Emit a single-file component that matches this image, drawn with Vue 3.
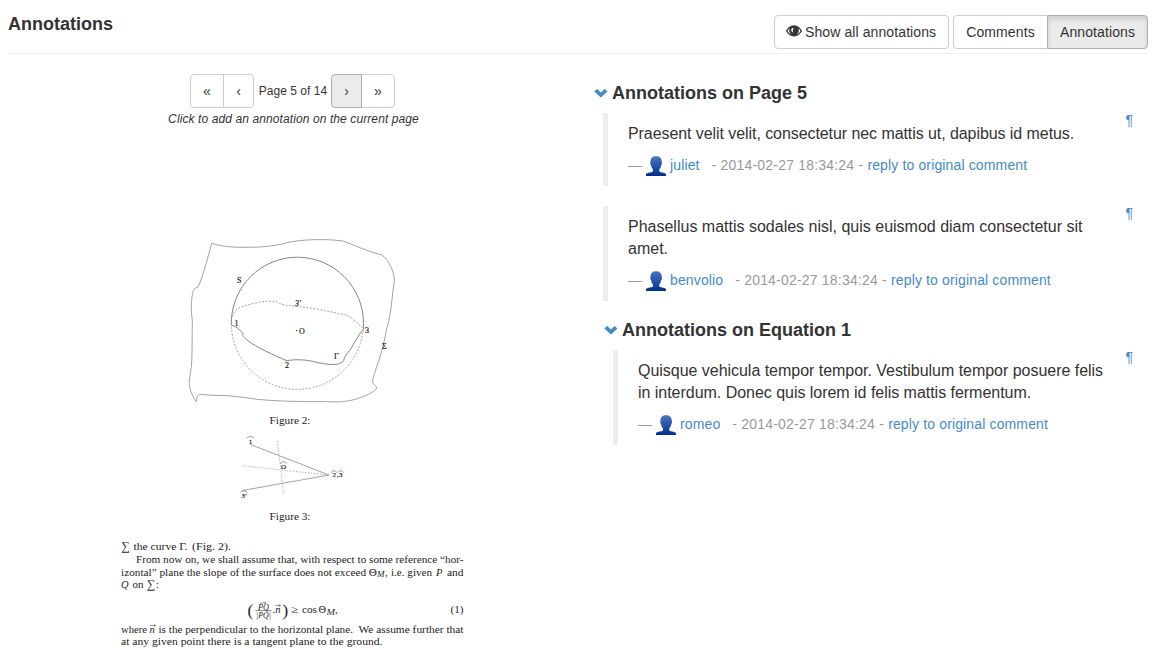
<script setup>
const groups = [
  {
    title: 'Annotations on Page 5',
    nested: false,
    notes: [
      { text: 'Praesent velit velit, consectetur nec mattis ut, dapibus id metus.', user: 'juliet', fit: 'tight' },
      { text: 'Phasellus mattis sodales nisl, quis euismod diam consectetur sit amet.', user: 'benvolio', fit: '' },
    ],
  },
  {
    title: 'Annotations on Equation 1',
    nested: true,
    notes: [
      { text: 'Quisque vehicula tempor tempor. Vestibulum tempor posuere felis in interdum. Donec quis lorem id felis mattis fermentum.', user: 'romeo', fit: 'snug' },
    ],
  },
]
</script>

<template>
  <div class="page">
    <header class="top">
      <h4>Annotations</h4>
      <div class="actions">
        <button class="btn show">
          <svg class="eye" width="16" height="14" viewBox="0 0 16 14">
            <path fill="#333" fill-rule="evenodd" d="M0 7C1.800 3.300 4.600 1.200 8 1.200s6.200 2.100 8 5.800C14.200 10.400 11.400 12.400 8 12.400S1.800 10.400 0 7ZM1.500 7c1 1.700 2.300 3 4 3.700A4.900 4.900 0 0 1 4 3.800C2.900 4.600 2.100 5.700 1.500 7Zm13 0c-.6-1.300-1.400-2.400-2.500-3.200a4.900 4.900 0 0 1-1.500 6.900c1.700-.7 3-2 4-3.700ZM5.200 5.600c-.1 1.500.8 2.800 2.200 3C6.500 7.400 6.600 5.600 7.600 4.600 7 3.500 5.500 4.200 5.200 5.600Z" />
          </svg>
          Show all annotations
        </button>
        <div class="group">
          <button class="btn comments">Comments</button>
          <button class="btn active">Annotations</button>
        </div>
      </div>
    </header>

    <main class="columns">
      <section class="doc">
        <div class="pager">
          <div class="group">
            <button class="btn wide">«</button>
            <button class="btn narrow">‹</button>
          </div>
          <span class="label">Page 5 of 14</span>
          <div class="group">
            <button class="btn narrow hover">›</button>
            <button class="btn wide">»</button>
          </div>
        </div>
        <em class="hint">Click to add an annotation on the current page</em>

        <svg class="sheet" width="572" height="521" viewBox="8 129 572 521">
          <g fill="none" stroke="#999" stroke-width="0.9">
            <path d="M211.700 243.300C219 246 230 247.300 243 247.300C258 247.300 272 247 286.700 242.700C300 239.500 325 238.500 343 241C354 245 369 252 381.700 255C388 259 395 272 394.300 282C392 293 392 307 389 320C386 330 385 338 383 346C380 359 374 373 372.700 380C371.500 385 377 385 376.700 388C375 392 361 399 347 401C338 403 325 401 313 401.700C293 401.500 275 401 256.700 399.300C241 397 228 395 213 395.300C204 395 197 393 197 397L196.500 401.700C192 397 188 385 189.500 379C191 370 192 363 192 353L192.300 320C190 307 192 291 194.500 289C195 286.500 197 289 198.300 286.700C203 276 208 257 211.700 243.300Z" />
            <path stroke="#777" d="M231.300 325V323.300A66.100 66.100 0 0 1 363.500 323.300V329M231.300 325C237 327 239 329 243 333.300C242 337 245 338 247 340C257 348 274 355 286.700 360.700C296 359 306 360 311 361C323 364 331 365 336.700 364.300C341 363 344 362 344 359C345 355 351 350 353 345C357 338 359 335 363.300 329.300" />
            <path stroke-dasharray="2 1.5" d="M231.300 323.300A66.100 66.100 0 0 0 363.500 323.300M231.300 320C233 313 236 309 240 307.500C252 303 267 300 276.700 301.700C283 306 288 305 295 306.500C307 306.500 331 312 346.700 315C353 319 358 323 363.300 328.300" />
            <path d="M250.500 444.500L329 475L242.500 490.500" />
            <path stroke-dasharray="1.2 1.8" d="M242.500 465.800L329 475M277.500 441.500L283.500 493" />
            <path stroke="#555" stroke-width="0.6" d="M247 438Q250.500 434.500 254 438M280 463.500Q283.500 460 287 463.500M331 472.500Q334 469 337 472.500M337.500 472.500Q340.500 469 343.500 472.500M240.500 492.500Q244 489 247.500 492.500" />
          </g>
          <g class="serif marks">
            <text x="237" y="283">S</text>
            <text x="234.500" y="326">1</text>
            <text x="295" y="306" class="it">3'</text>
            <text x="299" y="333.500">O</text>
            <text x="365" y="333">3</text>
            <text x="285" y="368">2</text>
            <text x="334" y="358.500">Γ</text>
            <text x="382" y="349">Σ</text>
            <g class="tiny">
              <text x="248.800" y="443.500">1</text>
              <text x="281" y="469">O</text>
              <text x="332.500" y="477" textLength="10">2,3</text>
              <text x="241.500" y="498" class="it">3'</text>
            </g>
          </g>
          <circle cx="296.500" cy="330.500" r="0.7" fill="#333" />

          <g class="serif body">
            <text x="269.500" y="424" textLength="41" lengthAdjust="spacingAndGlyphs">Figure 2:</text>
            <text x="269.500" y="520" textLength="41" lengthAdjust="spacingAndGlyphs">Figure 3:</text>
            <text x="121" y="550" class="sum">∑</text>
            <text x="133.500" y="550" textLength="54" lengthAdjust="spacingAndGlyphs">the curve Γ.</text>
            <text x="192" y="550" textLength="39" lengthAdjust="spacingAndGlyphs">(Fig. 2).</text>
            <text x="136" y="562.500" textLength="327.500" lengthAdjust="spacingAndGlyphs">From now on, we shall assume that, with respect to some reference “hor-</text>
            <text x="121" y="575.500" textLength="256" lengthAdjust="spacingAndGlyphs">izontal” plane the slope of the surface does not exceed Θ</text>
            <text x="377" y="577" class="sub" textLength="7.500" lengthAdjust="spacingAndGlyphs">M</text>
            <text x="385" y="575.500">,</text>
            <text x="391" y="575.500" textLength="41" lengthAdjust="spacingAndGlyphs">i.e. given</text>
            <text x="436" y="575.500" class="it">P</text>
            <text x="447" y="575.500" textLength="16.500" lengthAdjust="spacingAndGlyphs">and</text>
            <text x="121" y="588" class="it">Q</text>
            <text x="132.500" y="588" textLength="11" lengthAdjust="spacingAndGlyphs">on</text>
            <text x="146.500" y="588" class="sum">∑</text>
            <text x="156" y="588">:</text>

            <text x="247.500" y="615.500" class="paren">(</text>
            <text x="258" y="609.500" class="frac" textLength="11" lengthAdjust="spacingAndGlyphs">PQ</text>
            <text x="256" y="618" class="frac" textLength="15" lengthAdjust="spacingAndGlyphs">|PQ|</text>
            <text x="272.500" y="613">.<tspan class="it">n</tspan></text>
            <text x="282.500" y="615.500" class="paren">)</text>
            <text x="291.500" y="613" textLength="7" lengthAdjust="spacingAndGlyphs">≥</text>
            <text x="302" y="613" textLength="15" lengthAdjust="spacingAndGlyphs">cos</text>
            <text x="318.500" y="613">Θ</text>
            <text x="326.500" y="615" class="sub" textLength="8.500" lengthAdjust="spacingAndGlyphs">M</text>
            <text x="335" y="613">,</text>
            <text x="450.500" y="613" textLength="13" lengthAdjust="spacingAndGlyphs">(1)</text>

            <text x="121" y="632.500" textLength="26" lengthAdjust="spacingAndGlyphs">where</text>
            <text x="149.500" y="632.500" class="it">n</text>
            <text x="158.500" y="632.500" textLength="194.500" lengthAdjust="spacingAndGlyphs">is the perpendicular to the horizontal plane.</text>
            <text x="358.500" y="632.500" textLength="105" lengthAdjust="spacingAndGlyphs">We assume further that</text>
            <text x="121" y="645" textLength="261.500" lengthAdjust="spacingAndGlyphs">at any given point there is a tangent plane to the ground.</text>
          </g>
          <path fill="none" stroke="#444" stroke-width="0.6" d="M255.500 610.500H271.500M260 603H266M264.500 601.800L266 603L264.500 604.200M275.500 605.500H280.500M279.200 604.300L280.500 605.500L279.200 606.700M150 625.500H155.500M154.200 624.300L155.500 625.500L154.200 626.700" />
        </svg>
      </section>

      <section class="notes">
        <div v-for="g in groups" :key="g.title" :class="['block', { nested: g.nested }]">
          <h4>
            <svg width="14" height="10" viewBox="0 0 14 10">
              <path fill="#428bca" d="M.4 3.500L2.700 1.200Q3.100.9 3.500 1.200L6.900 4.600L10.300 1.200Q10.700.9 11.100 1.200L13.400 3.500L7.300 9.200Q6.900 9.500 6.500 9.200Z" />
            </svg>
            {{ g.title }}
          </h4>
          <blockquote v-for="n in g.notes" :key="n.user">
            <a class="pilcrow">¶</a>
            <p :class="n.fit">{{ n.text }}</p>
            <small>
              <span class="dash">—</span>
              <svg class="avatar" width="20" height="20" viewBox="0 0 20 20">
                <defs>
                  <linearGradient :id="'fill-' + n.user" x1="0" y1="0" x2="0" y2="1">
                    <stop offset="0" stop-color="#4a76c0" />
                    <stop offset="1" stop-color="#00308f" />
                  </linearGradient>
                </defs>
                <path :fill="`url(#fill-${n.user})`" d="M10 .3C6.500.3 4.400 2.300 4.500 6C4 6.300 4.300 8.800 5 9.200C5.400 11.300 6.200 12.300 6.900 13.300V15.600C5 17 0 16.700 0 18.500V20H20V18.500C20 16.700 15 17 13.300 15.600V13.300C14.200 12.300 14.900 11.300 15.200 9.200C16 8.800 16.300 6.300 15.800 6C15.900 2.300 13.500.3 10 .3Z" />
              </svg>
              <a class="user">{{ n.user }}</a>
              <span class="date">- 2014-02-27 18:34:24 - </span>
              <a class="reply">reply to original comment</a>
            </small>
          </blockquote>
        </div>
      </section>
    </main>
  </div>
</template>

<style>
body { margin: 0; background: #fff; overflow: hidden; }
</style>

<style scoped>
* { box-sizing: border-box; }
.page {
  height: 650px;
  overflow: hidden;
  padding: 0 10px 0 8px;
  font: 14px/20px "Liberation Sans", Arial, sans-serif;
  color: #333;
}
h4 { margin: 0; font-size: 18px; line-height: 20px; font-weight: bold; }
.top {
  display: flex;
  justify-content: space-between;
  align-items: flex-start;
  height: 54px;
  padding-top: 15px;
  border-bottom: 1px solid #eee;
}
.top h4 { margin-top: -1px; }
.actions { display: flex; gap: 4px; }
.group { display: flex; }
.btn {
  height: 34px;
  margin: 0;
  padding: 6px 12px;
  font: inherit;
  color: #333;
  background: #fff;
  border: 1px solid #ccc;
  border-radius: 4px;
  white-space: nowrap;
}
.show { width: 175px; display: flex; align-items: center; gap: 3px; padding: 0 11px; letter-spacing: 0.1px; }
.eye { margin-top: -2px; flex: none; }
.group .btn:first-child { border-radius: 4px 0 0 4px; }
.group .btn:last-child { border-radius: 0 4px 4px 0; margin-left: -1px; }
.btn.comments { width: 95px; padding: 6px 0; letter-spacing: 0.1px; }
.btn.active {
  position: relative;
  width: 101px;
  padding: 6px 0;
  letter-spacing: 0.1px;
  background: #ebebeb;
  border-color: #adadad;
  box-shadow: inset 0 3px 5px rgba(0, 0, 0, 0.125);
}
.btn.hover { position: relative; z-index: 1; background: #ebebeb; border-color: #adadad; }
.columns { display: flex; }
.doc { width: 572px; flex: none; display: flex; flex-direction: column; align-items: center; padding-top: 20px; }
.pager { display: flex; align-items: center; margin-left: -3px; }
.pager .btn { padding: 6px 0; }
.btn.wide { width: 34px; }
.btn.narrow { width: 31px; }
.label { width: 77px; text-align: center; font-size: 12px; padding-left: 1px; letter-spacing: 0.05px; }
.hint { font-size: 12px; line-height: 19px; margin: 2px 0 0 -1px; letter-spacing: 0.1px; }
.sheet { display: block; flex: none; }
.serif { font-family: "Liberation Serif", "Times New Roman", serif; fill: #222; }
.marks { font-size: 8px; stroke: #222; stroke-width: 0.2px; }
.tiny { font-size: 7px; }
.body { font-size: 10.500px; }
.it { font-style: italic; }
.sum { font-size: 12px; }
.sub { font-size: 7.500px; font-style: italic; }
.frac { font-size: 7.500px; font-style: italic; }
.paren { font-size: 17px; }
.notes { flex: 1; padding: 29px 0 0 14px; }
.block h4 { display: flex; align-items: center; gap: 4px; margin-bottom: 10px; }
.block.nested { margin-left: 10px; margin-top: -1px; }
blockquote {
  position: relative;
  margin: 0 0 20px 9px;
  padding: 10px 39px 10px 20px;
  border-left: 5px solid #eee;
}
p { margin: 0; font-size: 16px; line-height: 22px; }
p.tight { letter-spacing: -0.072px; }
p.snug { letter-spacing: -0.03px; }
small { display: flex; align-items: center; height: 22px; margin-top: 9px; font-size: 14px; color: #999; white-space: pre; }
a { color: #428bca; text-decoration: none; }
.dash { width: 18px; }
.avatar { flex: none; margin-top: 2px; }
.user { margin: 0 12px 0 4px; letter-spacing: 0.13px; }
.date { letter-spacing: 0.2px; }
.reply { letter-spacing: 0.14px; }
.pilcrow { position: absolute; top: -3px; right: 15px; font-size: 14px; line-height: 20px; }
</style>
